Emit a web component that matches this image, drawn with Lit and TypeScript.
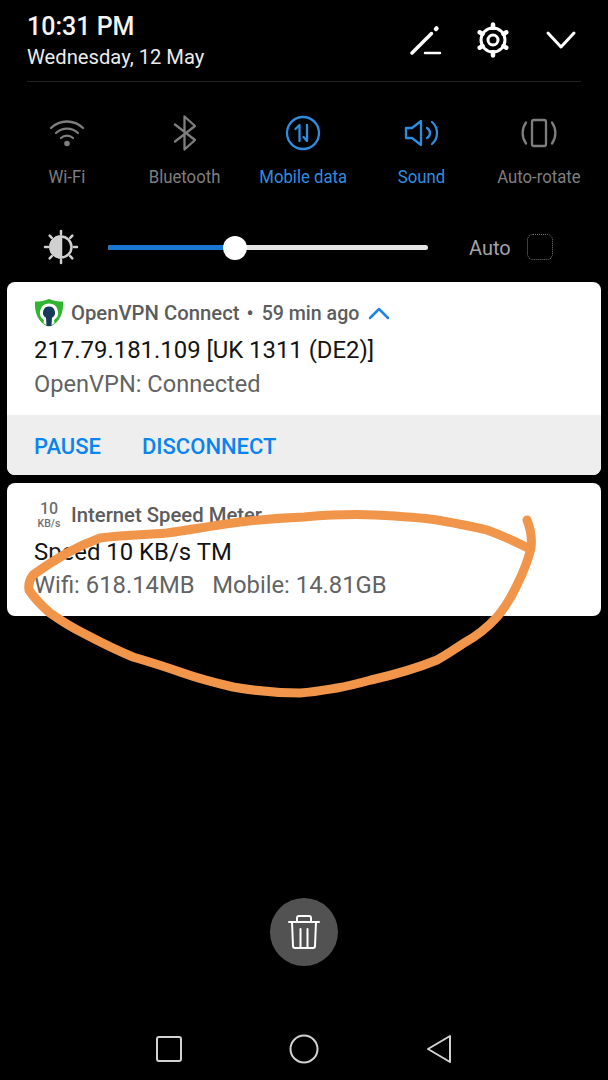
import { LitElement, css, html, svg } from 'lit';
import { customElement } from 'lit/decorators.js';

const tiles = [
  {
    label: 'Wi-Fi',
    on: false,
    icon: svg`<path d="M2 13a23 23 0 0 1 32 0M7 18a16 16 0 0 1 22 0M12 23a9 9 0 0 1 12 0"/><circle cx="18" cy="28.500" r="2.800" fill="currentColor" stroke="none"/>`,
  },
  {
    label: 'Bluetooth',
    on: false,
    icon: svg`<path d="M8 9.500 28 25 17.500 34.500V1.500L28 11 8 26.500"/>`,
  },
  {
    label: 'Mobile data',
    on: true,
    icon: svg`<circle cx="18" cy="18" r="16"/><path d="M10.500 14 14.500 10V26M22 10V26L18.500 22"/>`,
  },
  {
    label: 'Sound',
    on: true,
    icon: svg`<path d="M3 13H9L18 6V30L9 23H3ZM24 13a5.700 5.700 0 0 1 0 10M29 7a14.600 14.600 0 0 1 0 22"/>`,
  },
  {
    label: 'Auto-rotate',
    on: false,
    icon: svg`<rect x="11" y="5" width="14" height="26" rx="2"/><path d="M5 7.500a18 18 0 0 0 0 21M31 7.500a18 18 0 0 1 0 21"/>`,
  },
];

@customElement('app-root')
export class AppRoot extends LitElement {
  static styles = css`
    :host {
      display: block;
      font-family: Roboto, 'Noto Sans', sans-serif;
    }
    .screen {
      position: relative;
      display: flex;
      flex-direction: column;
      height: 1080px;
      overflow: hidden;
      background: #000;
      color: #fff;
    }
    svg {
      display: block;
      fill: none;
      stroke: currentColor;
      stroke-linecap: round;
      stroke-linejoin: round;
    }
    .header {
      display: flex;
      justify-content: space-between;
      align-items: flex-start;
      height: 67px;
      margin: 14px 27px 0 27px;
      border-bottom: 1px solid #232323;
    }
    .time {
      font-size: 25px;
      line-height: 26px;
      font-weight: 500;
      color: #f5f5f5;
    }
    .date {
      margin-top: 5px;
      font-size: 20.200px;
      line-height: 24px;
      color: #ebebeb;
    }
    .actions {
      display: flex;
      align-items: center;
      margin-top: 8px;
      margin-right: 2px;
    }
    .actions svg {
      width: 36px;
      height: 36px;
      stroke-width: 3;
    }
    .actions .gear {
      margin-left: 31px;
    }
    .actions .chevron {
      margin-left: 32px;
    }
    .tiles {
      display: grid;
      grid-template-columns: repeat(5, 118px);
      padding: 33px 8px 0;
    }
    .tile {
      display: flex;
      flex-direction: column;
      align-items: center;
      color: #7e7e7e;
    }
    .tile.on {
      color: #2d8ee0;
    }
    .tile svg {
      width: 36px;
      height: 36px;
      stroke-width: 2.300;
    }
    .tile span {
      margin-top: 16px;
      margin-bottom: -1px;
      font-size: 18px;
      line-height: 20px;
      transform: scaleX(0.93);
      white-space: nowrap;
    }
    .brightness {
      display: flex;
      align-items: center;
      height: 36px;
      margin-top: 43px;
      padding-left: 43px;
    }
    .sun {
      width: 36px;
      height: 36px;
      color: #d0d0d0;
      stroke-width: 2.500;
    }
    .slider {
      position: relative;
      display: flex;
      width: 320px;
      height: 5px;
      margin-left: 29px;
      border-radius: 3px;
      background: #e4e4e4;
    }
    .fill {
      width: 40%;
      border-radius: 3px 0 0 3px;
      background: #1976d2;
    }
    .thumb {
      position: absolute;
      left: 115px;
      top: -9px;
      width: 24px;
      height: 24px;
      border-radius: 50%;
      background: #fff;
    }
    .auto {
      margin-left: 41px;
      padding-top: 2px;
      font-size: 20px;
      color: #a3a3a3;
    }
    .check {
      width: 24px;
      height: 24px;
      margin-left: 16px;
      border: 1px dotted #7a7a7a;
      border-radius: 6px;
    }
    .cards {
      display: flex;
      flex-direction: column;
      gap: 8px;
      margin: 17px 7px 0;
    }
    .card {
      overflow: hidden;
      border-radius: 8px;
      background: #fff;
    }
    .card-body {
      padding: 15px 27px 0;
    }
    .vpn .card-body {
      height: 133px;
      box-sizing: border-box;
    }
    .speed {
      height: 133px;
    }
    .speed .card-body {
      padding-top: 16px;
    }
    .speed .title {
      margin-top: 4px;
    }
    .speed .text {
      margin-top: -1px;
      font-size: 23.800px;
    }
    .app {
      display: flex;
      align-items: center;
      height: 32px;
      font-size: 20.300px;
      font-weight: 500;
      color: #5c5c5c;
      white-space: nowrap;
    }
    .dot {
      margin: 0 8px 0 7px;
    }
    .ago {
      font-size: 19.600px;
    }
    .shield {
      width: 30px;
      height: 30px;
      margin-right: 7px;
      stroke: none;
    }
    .up {
      width: 22px;
      height: 14px;
      margin-left: 9px;
      color: #2083e6;
      stroke-width: 2.500;
    }
    .rate {
      display: flex;
      flex-direction: column;
      align-items: center;
      width: 30px;
      margin-right: 7px;
      color: #6e6e6e;
      font-weight: 500;
    }
    .rate b {
      font-size: 16px;
      line-height: 16px;
      font-weight: 500;
    }
    .rate small {
      font-size: 10.500px;
      line-height: 13px;
    }
    .title {
      margin-top: 4px;
      font-size: 23.900px;
      line-height: 34px;
      color: #141414;
      white-space: nowrap;
    }
    .text {
      font-size: 23.600px;
      line-height: 34px;
      color: #636363;
      white-space: pre;
    }
    .buttons {
      display: flex;
      gap: 41px;
      align-items: center;
      height: 58px;
      padding: 2px 27px 0;
      background: #eeeeee;
      font-size: 22px;
      font-weight: 500;
      color: #0a84f0;
    }
    .trash {
      display: flex;
      align-items: center;
      justify-content: center;
      align-self: center;
      width: 68px;
      height: 68px;
      margin-top: auto;
      border-radius: 50%;
      background: #525252;
    }
    .trash svg {
      width: 36px;
      height: 36px;
      stroke-width: 2;
    }
    .nav {
      display: flex;
      justify-content: center;
      gap: 99px;
      margin-top: 65px;
      margin-bottom: 13px;
      color: #d2d2d2;
    }
    .nav svg {
      width: 36px;
      height: 36px;
      stroke-width: 2;
    }
    .scribble {
      position: absolute;
      left: 0;
      top: 0;
      width: 608px;
      height: 1080px;
      color: #f0954a;
      stroke-width: 9;
      pointer-events: none;
    }
  `;

  render() {
    return html`
      <div class="screen">
        <div class="header">
          <div>
            <div class="time">10:31 PM</div>
            <div class="date">Wednesday, 12 May</div>
          </div>
          <div class="actions">
            <svg viewBox="0 0 36 36">
              <path d="M4 31 23.500 11.500" stroke-width="3.500" />
              <path d="M28 7 28.500 6.500" stroke-width="4.500" />
              <path d="M17 31H32" stroke-width="2.500" />
            </svg>
            <svg class="gear" viewBox="0 0 36 36">
              <circle cx="18" cy="18" r="12" />
              <circle cx="18" cy="18" r="5" />
              <path
                d="M18 2.500V6M18 30v3.500M4.600 10.300l3 1.700M28.400 24l3 1.700M4.600 25.700l3-1.700M28.400 12l3-1.700"
                stroke-width="4.500"
              />
            </svg>
            <svg class="chevron" viewBox="0 0 36 36">
              <path d="M5 11 18 25 31 11" />
            </svg>
          </div>
        </div>

        <div class="tiles">
          ${tiles.map(
            (t) => html`
              <div class="tile ${t.on ? 'on' : ''}">
                <svg viewBox="0 0 36 36">${t.icon}</svg>
                <span>${t.label}</span>
              </div>
            `
          )}
        </div>

        <div class="brightness">
          <svg class="sun" viewBox="0 0 36 36">
            <circle cx="18" cy="18" r="10.500" />
            <path d="M18 7.500a10.500 10.500 0 0 0 0 21Z" fill="currentColor" />
            <path
              d="M18 2v3M18 31v3M2 18h3M31 18h3M6.700 6.700l2.100 2.100M27.200 27.200l2.100 2.100M6.700 29.300l2.100-2.100M27.200 8.800l2.100-2.100"
            />
          </svg>
          <div class="slider">
            <div class="fill"></div>
            <div class="thumb"></div>
          </div>
          <span class="auto">Auto</span>
          <div class="check"></div>
        </div>

        <div class="cards">
          <div class="card vpn">
            <div class="card-body">
              <div class="app">
                <svg class="shield" viewBox="0 0 30 30">
                  <path
                    d="M15 1C10 3 6 3.500 1 3.500 .5 14 3 24 15 29 27 24 29.500 14 29 3.500 24 3.500 20 3 15 1Z"
                    fill="#2fb52f"
                  />
                  <path
                    d="M15 5.500a9 9 0 0 0-5 16.500L9.500 25 15 29 20.500 25 20 22A9 9 0 0 0 15 5.500Z"
                    fill="#fff"
                  />
                  <path
                    d="M15 8.500a6 6 0 0 0-3 11.200L12.500 28h5l.5-8.300A6 6 0 0 0 15 8.500Z"
                    fill="#17395c"
                  />
                </svg>
                OpenVPN Connect<span class="dot">•</span><span class="ago">59 min ago</span>
                <svg class="up" viewBox="0 0 22 14"><path d="M2 12 11 3 20 12" /></svg>
              </div>
              <div class="title">217.79.181.109 [UK 1311 (DE2)]</div>
              <div class="text">OpenVPN: Connected</div>
            </div>
            <div class="buttons"><span>PAUSE</span><span>DISCONNECT</span></div>
          </div>

          <div class="card speed">
            <div class="card-body">
              <div class="app">
                <div class="rate"><b>10</b><small>KB/s</small></div>
                Internet Speed Meter
              </div>
              <div class="title">Speed 10 KB/s TM</div>
              <div class="text">Wifi: 618.14MB   Mobile: 14.81GB</div>
            </div>
          </div>
        </div>

        <div class="trash">
          <svg viewBox="0 0 36 36">
            <path d="M3 8H33M6 8 7 32a2 2 0 0 0 2 2H27a2 2 0 0 0 2-2L30 8M11 8V4a2 2 0 0 1 2-2H23a2 2 0 0 1 2 2V8M14.500 15V34M21.500 15V34" />
          </svg>
        </div>

        <div class="nav">
          <svg viewBox="0 0 36 36"><rect x="6" y="6" width="24" height="24" rx="2" /></svg>
          <svg viewBox="0 0 36 36"><circle cx="18" cy="18" r="13.500" /></svg>
          <svg viewBox="0 0 36 36"><path d="M29 5V31L7 18Z" /></svg>
        </div>

        <svg class="scribble" viewBox="0 0 608 1080">
          <path
            d="M527 520C531 530 532 540 531 548C527 565 522 575 517 585C510 600 503 610 497 617C487 628 475 637 464 643C455 649 446 655 437 660C415 669 393 675 371 680C360 683 349 686 337 688C325 690 314 692 300 693C278 693 256 691 233 687C216 683 200 679 183 673C166 667 150 662 133 657C116 650 100 642 83 633C71 627 60 620 50 613C42 606 34 598 29 590C28 584 30 579 33 575C44 567 55 560 67 553C78 547 89 542 100 538C122 535 145 535 167 533C189 530 211 526 233 523C255 520 278 518 304 517C328 515 352 514 375 515C396 516 417 517 437 520C454 523 471 526 487 530C501 535 514 541 528 548"
          />
        </svg>
      </div>
    `;
  }
}
